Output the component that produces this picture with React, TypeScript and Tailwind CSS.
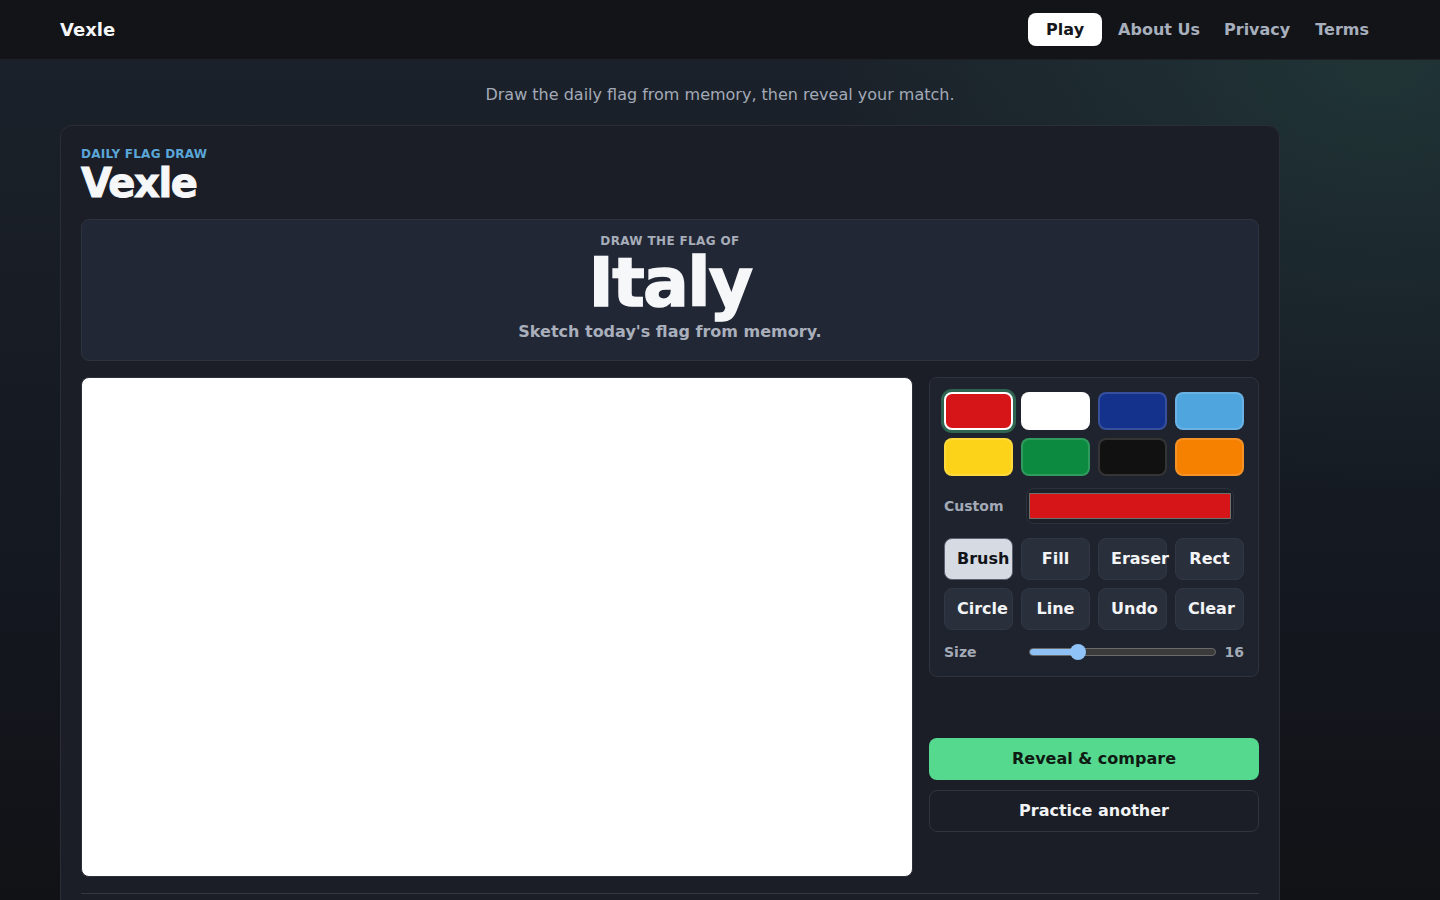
import { useState } from 'react'

const SWATCHES = [
  { id: 'red', cls: 'bg-[#d61519]' },
  { id: 'white', cls: 'bg-white' },
  { id: 'navy', cls: 'bg-[#14328c]' },
  { id: 'sky', cls: 'bg-[#4fa5de]' },
  { id: 'yellow', cls: 'bg-[#fdd31a]' },
  { id: 'green', cls: 'bg-[#0b8a40]' },
  { id: 'black', cls: 'bg-[#111111]' },
  { id: 'orange', cls: 'bg-[#f68100]' },
]

const TOOLS = ['Brush', 'Fill', 'Eraser', 'Rect', 'Circle', 'Line', 'Undo', 'Clear']

export default function App() {
  const [color, setColor] = useState('red')
  const [tool, setTool] = useState('Brush')

  return (
    <div className="min-h-screen bg-[#111216] font-['DejaVu_Sans',sans-serif] text-[#f3f4f6]">
      {/* Top bar */}
      <header className="h-[60px] bg-[#131418] border-b border-[#1f2127]">
        <div className="h-full px-[60px] flex items-center">
          <span className="text-lg font-bold text-[#f5f6f8]">Vexle</span>
          <nav className="ml-auto flex items-center">
            <a className="px-[18px] h-[33px] flex items-center rounded-lg bg-white text-[#15171c] font-bold">Play</a>
            <a className="ml-[4px] px-[12px] h-[33px] flex items-center font-bold text-[#a7afbd]">About Us</a>
            <a className="px-[12px] h-[33px] flex items-center font-bold text-[#a7afbd]">Privacy</a>
            <a className="pl-[13px] pr-[11px] h-[33px] flex items-center font-bold text-[#a7afbd]">Terms</a>
          </nav>
        </div>
      </header>

      <main className="bg-[image:radial-gradient(ellipse_560px_460px_at_96%_0%,rgba(50,120,95,0.22),transparent),linear-gradient(to_bottom,#1b212a,#141820_500px,#111216_840px)] pt-[23px] px-[60px] pb-10">
        <p className="text-center leading-6 text-[#a3aab7] mb-[18px]">
          Draw the daily flag from memory, then reveal your match.
        </p>

        <section className="w-[1220px] rounded-xl border border-[#2a2e38] bg-[#1b1e26] px-5 pt-5 pb-6">
          <div className="text-xs leading-4 font-bold tracking-[0.02em] text-[#5aa6d8]">DAILY FLAG DRAW</div>
          <h1 className="mt-[1px] text-[40px] leading-none font-black tracking-[-0.035em] text-[#f6f7f9] [-webkit-text-stroke:1px_#f6f7f9]">Vexle</h1>

          {/* Prompt */}
          <div className="mt-4 rounded-lg border border-[#2e3340] bg-[#222735] pt-[13px] pb-4 text-center">
            <div className="text-xs leading-4 font-bold tracking-[0.03em] text-[#a7adb9]">DRAW THE FLAG OF</div>
            <div className="text-[68px] leading-none font-black tracking-[-0.025em] text-[#f6f7f9] [-webkit-text-stroke:1.5px_#f6f7f9]">Italy</div>
            <div className="mt-[3px] leading-6 font-bold text-[#a9afbb]">Sketch today's flag from memory.</div>
          </div>

          <div className="mt-4 grid grid-cols-[1fr_330px] gap-4 items-start">
            {/* Canvas */}
            <div className="h-[500px] rounded-lg border border-[#2b2f3a] bg-white" />

            <div className="flex flex-col">
              {/* Tool panel */}
              <div className="rounded-lg border border-[#2e3340] bg-[#1f232d] p-[14px]">
                <div className="grid grid-cols-4 gap-2">
                  {SWATCHES.map((s) => (
                    <button
                      key={s.id}
                      onClick={() => setColor(s.id)}
                      className={
                        'h-[38px] rounded-lg border-2 ' + s.cls + ' ' +
                        (color === s.id
                          ? 'border-white ring-[3px] ring-[#2f6550]'
                          : 'border-white/15')
                      }
                    />
                  ))}
                </div>

                <div className="mt-3 flex items-center">
                  <span className="w-[82px] text-sm font-bold text-[#a3aab7]">Custom</span>
                  <div className="w-[208px] h-9 rounded-lg border border-[#2c313d] bg-[#1c2029] px-[2px] py-[4px]">
                    <div className="h-full bg-[#d61519] border border-[#6f6f6f]" />
                  </div>
                </div>

                <div className="mt-[14px] grid grid-cols-4 gap-2">
                  {TOOLS.map((t) => (
                    <button
                      key={t}
                      onClick={() => setTool(t)}
                      className={
                        'h-[42px] min-w-0 px-3 rounded-lg border font-bold whitespace-nowrap text-center ' +
                        (tool === t
                          ? 'bg-[#d6dae3] border-[#5b6170] text-[#111318]'
                          : 'bg-[#2a2f3c] border-[#323745] text-[#f3f4f6]')
                      }
                    >
                      {t}
                    </button>
                  ))}
                </div>

                <div className="mt-3 h-5 flex items-center">
                  <span className="w-[85px] text-sm font-bold text-[#a3aab7]">Size</span>
                  <div className="relative w-[187px] h-[8px] rounded-full border border-[#6a6a6a] bg-[#3b3b3b]">
                    <div className="h-full w-[26%] rounded-full bg-[#8fc0f5]" />
                    <div className="absolute left-[26%] top-1/2 -translate-x-1/2 -translate-y-1/2 size-4 rounded-full bg-[#8fc3f7]" />
                  </div>
                  <span className="ml-auto text-sm font-bold text-[#a3aab7]">16</span>
                </div>
              </div>

              {/* Actions */}
              <button className="mt-[61px] h-[42px] rounded-lg bg-[#55d98f] font-bold text-[#0f1a13]">
                Reveal &amp; compare
              </button>
              <button className="mt-[10px] h-[42px] rounded-lg border border-[#2f3441] bg-[#1b1e26] font-bold text-[#f1f3f5]">
                Practice another
              </button>
            </div>
          </div>

          <div className="mt-4 border-t border-[#333846] pt-6">
            <div className="h-40" />
          </div>
        </section>
      </main>
    </div>
  )
}
